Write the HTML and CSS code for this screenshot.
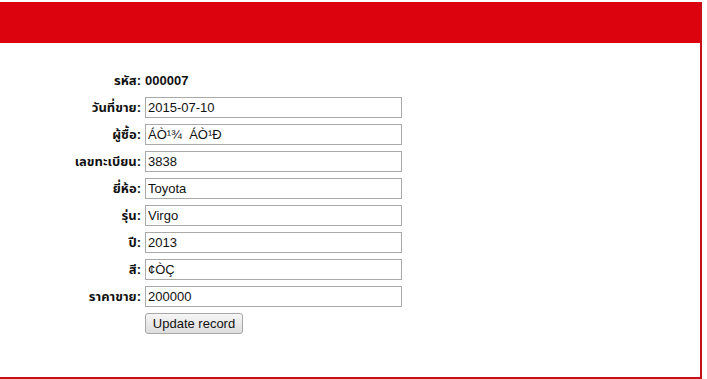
FILE: index.html
```html
<!DOCTYPE html>
<html lang="th">

<head>
  <meta charset="UTF-8">
  <title>แก้ไขข้อมูล</title>
  <link rel="stylesheet" href="styles.css">
</head>

<body>
  <div class="wrap">
    <div class="header"></div>
    <form class="form">
      <label class="lbl">รหัส:</label>
      <div class="code">000007</div>

      <label class="lbl">วันที่ขาย:</label>
      <input class="field" type="text" value="2015-07-10">

      <label class="lbl">ผู้ซื้อ:</label>
      <input class="field" type="text" value="ÁÒ¹¾  ÁÒ¹Ð">

      <label class="lbl">เลขทะเบียน:</label>
      <input class="field" type="text" value="3838">

      <label class="lbl">ยี่ห้อ:</label>
      <input class="field" type="text" value="Toyota">

      <label class="lbl">รุ่น:</label>
      <input class="field" type="text" value="Virgo">

      <label class="lbl">ปี:</label>
      <input class="field" type="text" value="2013">

      <label class="lbl">สี:</label>
      <input class="field" type="text" value="¢ÒÇ">

      <label class="lbl">ราคาขาย:</label>
      <input class="field" type="text" value="200000">

      <span></span>
      <div><button type="button" class="btn">Update record</button></div>
    </form>
  </div>
</body>

</html>
```

FILE: styles.css
```css
body {
  margin: 0;
  font-family: Tahoma, "Liberation Sans", "Noto Sans Thai", "Noto Sans Thai UI", "Noto Sans", sans-serif;
  font-size: 13px;
  color: #111;
  background: #fff;
}

.wrap {
  margin-top: 2px;
  width: 702px;
  height: 377px;
  box-sizing: border-box;
  border-right: 2px solid #c80f19;
  border-bottom: 2px solid #c80f19;
}

.header {
  height: 41px;
  background: #dc020e;
}

.form {
  display: grid;
  grid-template-columns: 141px 257px;
  grid-auto-rows: 21px;
  column-gap: 4px;
  row-gap: 6px;
  margin-top: 27px;
}

.lbl {
  text-align: right;
  font-weight: bold;
  line-height: 21px;
  white-space: nowrap;
}

.code {
  font-weight: bold;
  line-height: 21px;
}

.field {
  box-sizing: border-box;
  width: 257px;
  height: 21px;
  margin: 0;
  padding: 0 2px;
  border: 1px solid #a9a9a9;
  font-family: "Liberation Sans", Arial, sans-serif;
  font-size: 13px;
  color: #111;
}

.btn {
  height: 21px;
  width: 98px;
  padding: 0;
  border: 1px solid #a7a7a7;
  border-radius: 3px;
  background: linear-gradient(#f6f6f6, #dddddd);
  font-family: "Liberation Sans", Arial, sans-serif;
  font-size: 13px;
  color: #111;
}
```
